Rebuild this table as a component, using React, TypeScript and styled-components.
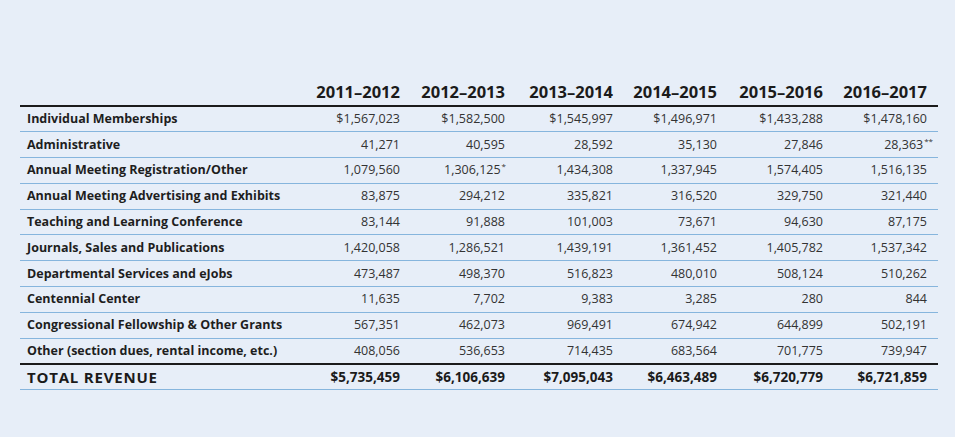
import { styled, createGlobalStyle } from "styled-components";

const GlobalStyle = createGlobalStyle`
  html, body {
    margin: 0;
    padding: 0;
    background: #e7eef8;
  }
  body {
    font-family: "Open Sans", "Liberation Sans", sans-serif;
    color: #1c1c1c;
  }
`;

type Row = {
  label: string;
  values: string[];
  notes?: string[];
};

const years = ["2011–2012", "2012–2013", "2013–2014", "2014–2015", "2015–2016", "2016–2017"];
// column widths as laid out in the printed table (last one carries the right gutter)
const colWidths = [275, 105, 105, 108, 104, 106, 115];

const rows: Row[] = [
  {
    label: "Individual Memberships",
    values: ["$1,567,023", "$1,582,500", "$1,545,997", "$1,496,971", "$1,433,288", "$1,478,160"],
  },
  {
    label: "Administrative",
    values: ["41,271", "40,595", "28,592", "35,130", "27,846", "28,363"],
    notes: ["", "", "", "", "", "**"],
  },
  {
    label: "Annual Meeting Registration/Other",
    values: ["1,079,560", "1,306,125", "1,434,308", "1,337,945", "1,574,405", "1,516,135"],
    notes: ["", "*", "", "", "", ""],
  },
  {
    label: "Annual Meeting Advertising and Exhibits",
    values: ["83,875", "294,212", "335,821", "316,520", "329,750", "321,440"],
  },
  {
    label: "Teaching and Learning Conference",
    values: ["83,144", "91,888", "101,003", "73,671", "94,630", "87,175"],
  },
  {
    label: "Journals, Sales and Publications",
    values: ["1,420,058", "1,286,521", "1,439,191", "1,361,452", "1,405,782", "1,537,342"],
  },
  {
    label: "Departmental Services and eJobs",
    values: ["473,487", "498,370", "516,823", "480,010", "508,124", "510,262"],
  },
  {
    label: "Centennial Center",
    values: ["11,635", "7,702", "9,383", "3,285", "280", "844"],
  },
  {
    label: "Congressional Fellowship & Other Grants",
    values: ["567,351", "462,073", "969,491", "674,942", "644,899", "502,191"],
  },
  {
    label: "Other (section dues, rental income, etc.)",
    values: ["408,056", "536,653", "714,435", "683,564", "701,775", "739,947"],
  },
];

const totals = ["$5,735,459", "$6,106,639", "$7,095,043", "$6,463,489", "$6,720,779", "$6,721,859"];

const RevenueTable = () => {
  return (
    <Page>
      <GlobalStyle />
      <Table>
        <colgroup>
          {colWidths.map((w, i) => (
            <col key={i} style={{ width: w }} />
          ))}
        </colgroup>
        <thead>
          <tr>
            <HeadCell />
            {years.map((y) => (
              <HeadCell key={y}>{y}</HeadCell>
            ))}
          </tr>
        </thead>
        <tbody>
          {rows.map((row, i) => (
            <DataRow key={row.label} $last={i === rows.length - 1}>
              <Label>{row.label}</Label>
              {row.values.map((v, j) => {
                const note = row.notes ? row.notes[j] : "";
                return (
                  <Value key={j}>
                    {v}
                    {note && <Note $double={note.length > 1}>{note}</Note>}
                  </Value>
                );
              })}
            </DataRow>
          ))}
          <TotalRow>
            <TotalLabel>TOTAL REVENUE</TotalLabel>
            {totals.map((t) => (
              <TotalValue key={t}>{t}</TotalValue>
            ))}
          </TotalRow>
        </tbody>
      </Table>
    </Page>
  );
};

const Page = styled.div`
  width: 955px;
  height: 437px;
  padding: 77px 0 0 20px;
  box-sizing: border-box;
`;

const Table = styled.table`
  width: 918px;
  table-layout: fixed;
  border-collapse: collapse;
  border-spacing: 0;
`;

const HeadCell = styled.th`
  height: 24px;
  padding: 0 0 4px 0;
  vertical-align: bottom;
  text-align: right;
  font-size: 16.5px;
  font-weight: 700;
  line-height: 18px;
  color: #1b1b1b;
  white-space: nowrap;
  border-bottom: 2px solid #1b1b1b;
  &:last-child {
    padding-right: 11px;
  }
`;

const DataRow = styled.tr<{ $last?: boolean }>`
  height: 25.8px;
  border-bottom: ${(p) => (p.$last ? "2px solid #1b1b1b" : "1px solid #86b5dd")};
  td:last-child {
    padding-right: 11px;
  }
`;

const Label = styled.td`
  padding: 0 0 0 7px;
  font-size: 12.5px;
  font-weight: 700;
  line-height: 16px;
  color: #1e1e1e;
  white-space: nowrap;
`;

const Value = styled.td`
  padding: 0;
  text-align: right;
  font-size: 12.5px;
  font-weight: 400;
  line-height: 16px;
  color: #333333;
  white-space: nowrap;
`;

const Note = styled.sup<{ $double?: boolean }>`
  font-size: 8px;
  line-height: 0;
  vertical-align: 5px;
  margin-left: 1px;
  margin-right: ${(p) => (p.$double ? "-6px" : "-1px")};
`;

const TotalRow = styled.tr`
  height: 26px;
  border-bottom: 1px solid #86b5dd;
  td:last-child {
    padding-right: 11px;
  }
`;

const TotalLabel = styled.td`
  padding: 0 0 0 7px;
  font-size: 15px;
  font-weight: 700;
  letter-spacing: 0.8px;
  line-height: 18px;
  color: #1b1b1b;
  white-space: nowrap;
`;

const TotalValue = styled.td`
  padding: 0;
  text-align: right;
  font-size: 13.5px;
  font-weight: 700;
  line-height: 18px;
  color: #1b1b1b;
`;

export default RevenueTable;
